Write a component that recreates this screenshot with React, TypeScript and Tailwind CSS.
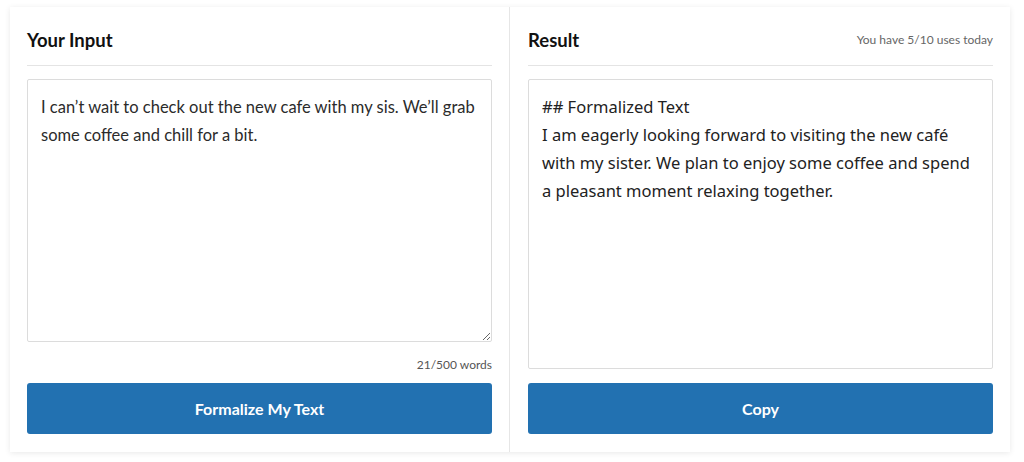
import React, { useState } from 'react';

const App: React.FC = () => {
    const [input, setInput] = useState(
        'I can’t wait to check out the new cafe with my sis. We’ll grab some coffee and chill for a bit.'
    );

    const words = input.trim() ? input.trim().split(/\s+/).length : 0;

    return (
        <div className="min-h-screen bg-white pt-[7px] pl-[10px] font-['Lato',sans-serif]">
            <div className="w-[1000px] h-[445px] flex bg-white shadow-[0_1px_6px_rgba(0,0,0,0.09)]">
                {/* Input panel */}
                <div className="w-[500px] border-r border-[#e6e6e6] px-[17px] pt-[20px] flex flex-col">
                    <div className="pb-[12px] border-b border-[#e4e4e4]">
                        <h2 className="leading-[26px] text-[18.5px] font-bold text-[#111]">Your Input</h2>
                    </div>
                    <textarea
                        value={input}
                        onChange={(e) => setInput(e.target.value)}
                        className="mt-[13px] h-[263px] w-full border border-[#dcdcdc] rounded-[2px] px-[13px] py-[13px] text-[16.5px] leading-[28px] text-[#2b2b2b] outline-none"
                    />
                    <div className="pt-[15px] mb-[10px] leading-[16px] text-right text-[12px] text-[#555]">
                        {words}/500 words
                    </div>
                    <button className="h-[51px] w-full rounded-[3px] bg-[#2271b1] text-white text-[16px] font-bold">
                        Formalize My Text
                    </button>
                </div>

                {/* Result panel */}
                <div className="w-[500px] pl-[18px] pr-[17px] pt-[20px] flex flex-col">
                    <div className="pb-[12px] border-b border-[#e4e4e4] flex items-center justify-between">
                        <h2 className="leading-[26px] text-[18.5px] font-bold text-[#111]">Result</h2>
                        <span className="text-[12px] text-[#666]">You have 5/10 uses today</span>
                    </div>
                    <div className="mt-[13px] h-[290px] border border-[#dcdcdc] rounded-[2px] px-[13px] py-[13px] text-[16.5px] leading-[28px] text-[#222] font-['Noto_Sans',sans-serif]">
                        <div>## Formalized Text</div>
                        <div>I am eagerly looking forward to visiting the new café</div>
                        <div>with my sister. We plan to enjoy some coffee and spend</div>
                        <div>a pleasant moment relaxing together.</div>
                    </div>
                    <button className="mt-[14px] h-[51px] w-full rounded-[3px] bg-[#2271b1] text-white text-[16px] font-bold">
                        Copy
                    </button>
                </div>
            </div>
        </div>
    );
};

export default App;
